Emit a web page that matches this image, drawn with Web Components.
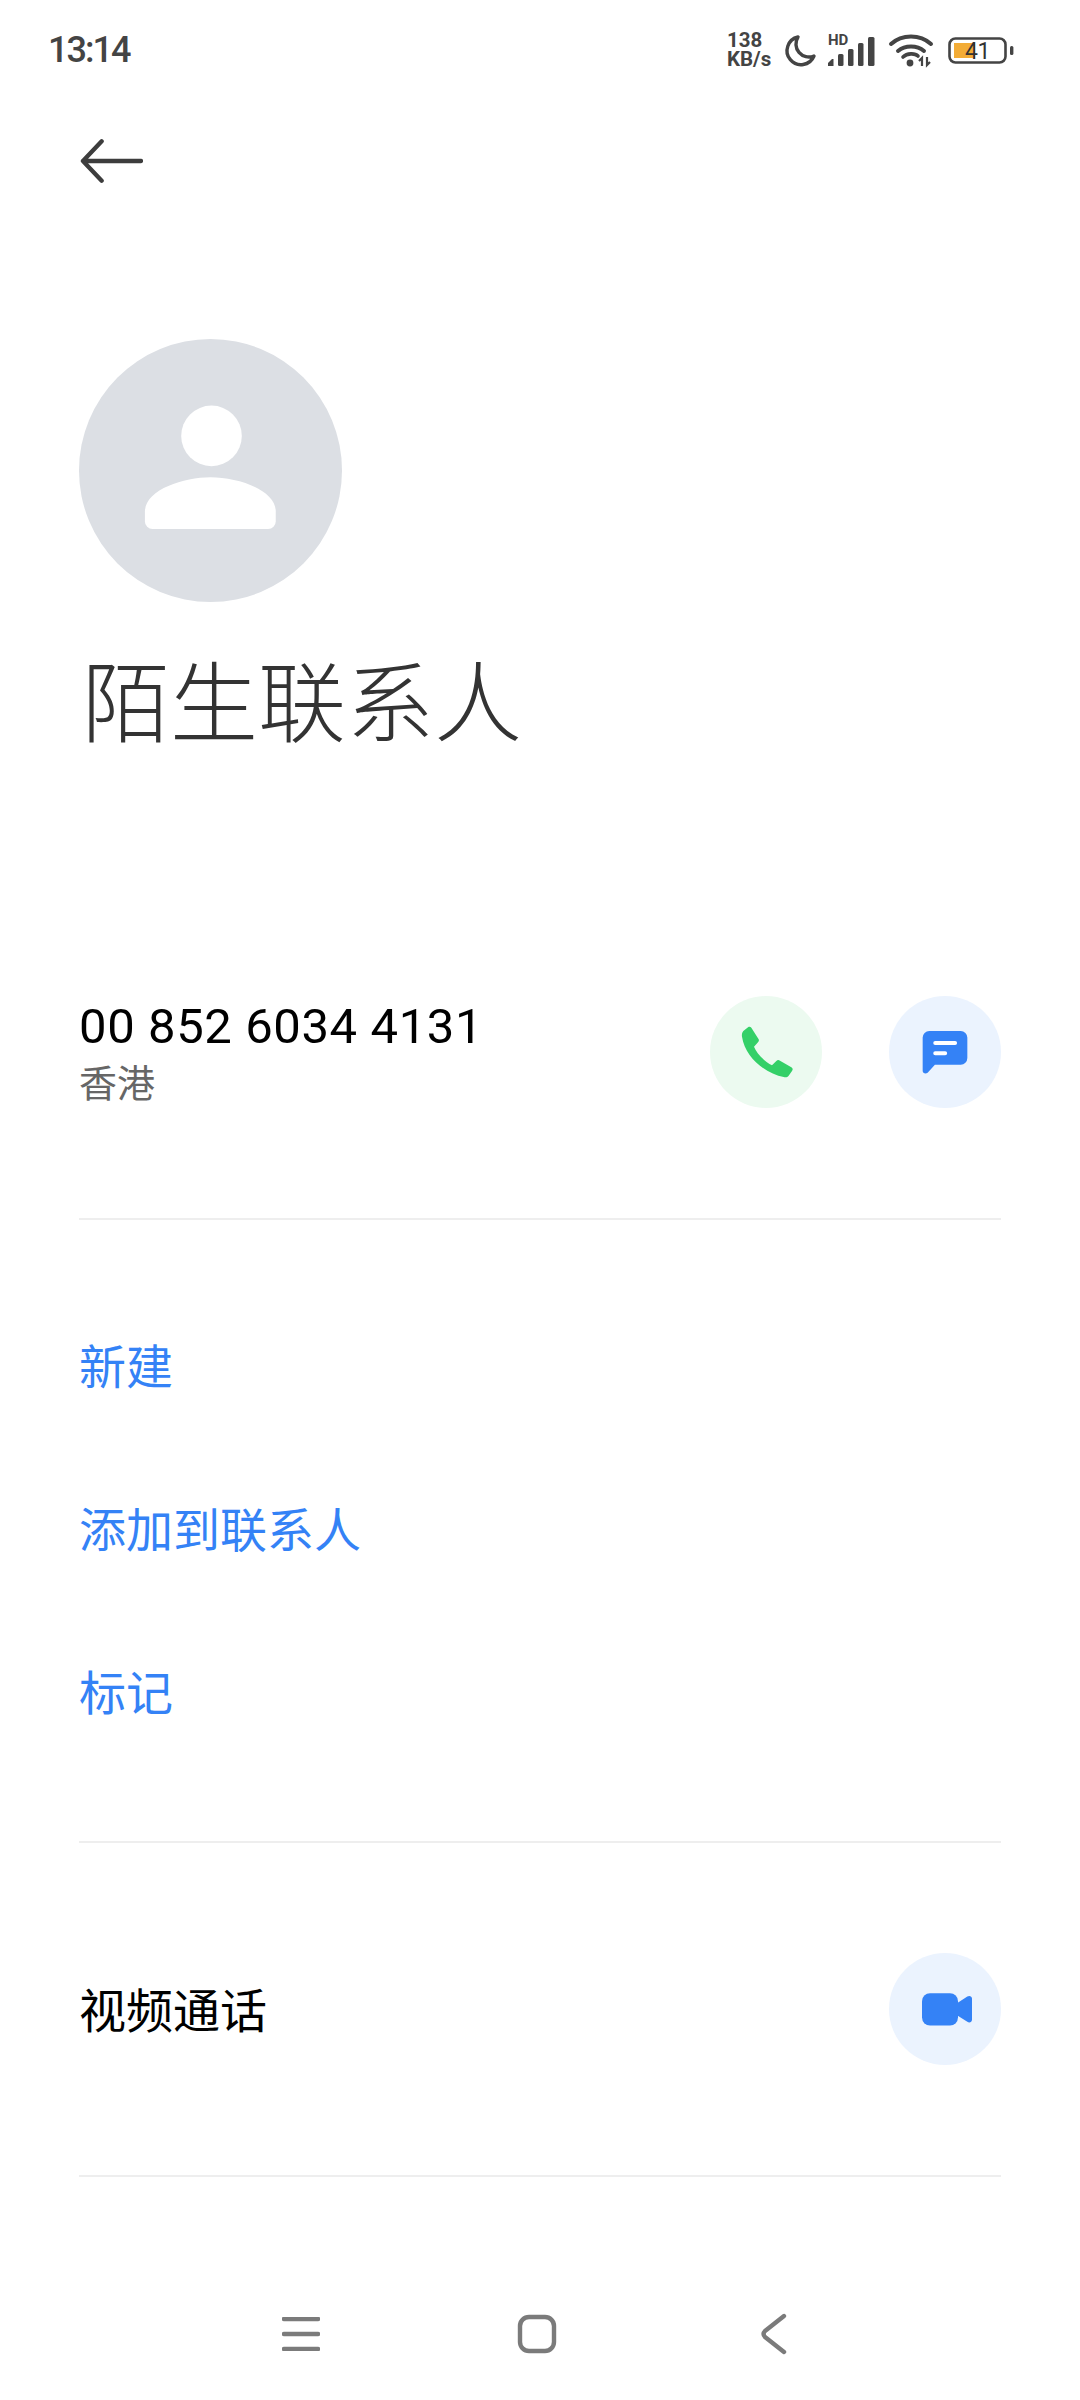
<!DOCTYPE html>
<html lang="zh">
<head>
<meta charset="utf-8">
<title>陌生联系人</title>
<style>
    html, body { margin: 0; background: #fff; }
    body { width: 1080px; height: 2400px; overflow: hidden; font-family: Roboto, "Noto Sans CJK SC", sans-serif; }
    app-screen { --blue: #3482f6; --line: #eeeeee; }
</style>
</head>
<body>
<app-screen>
    <status-bar slot="status"></status-bar>
    <back-bar slot="top"></back-bar>
    <contact-head slot="head">陌生联系人</contact-head>
    <section-row slot="list" height="334" line>
        <phone-info number="00 852 6034 4131" region="香港"></phone-info>
        <round-button slot="end" kind="call"></round-button>
        <round-button slot="end" kind="sms"></round-button>
    </section-row>
    <action-list slot="list">
        <action-item>新建</action-item>
        <action-item>添加到联系人</action-item>
        <action-item>标记</action-item>
    </action-list>
    <section-row slot="list" height="334" line>
        <span style="font:400 47px 'Noto Sans CJK SC',sans-serif;color:#000;padding-bottom:4px">视频通话</span>
        <round-button slot="end" kind="video"></round-button>
    </section-row>
    <nav-bar slot="nav"></nav-bar>
</app-screen>

<script>
const tpl = html => {
    const t = document.createElement('template');
    t.innerHTML = html;
    return t;
};

class Base extends HTMLElement {
    constructor() {
        super();
        this.attachShadow({ mode: 'open' }).appendChild(this.constructor.template.content.cloneNode(true));
    }
}

customElements.define('app-screen', class extends Base {
    static template = tpl(`<style>
        :host { display:flex; flex-direction:column; width:1080px; height:2400px; }
        main { display:block; }
        nav { margin-top:auto; }
    </style>
    <slot name="status"></slot>
    <slot name="top"></slot>
    <slot name="head"></slot>
    <main><slot name="list"></slot></main>
    <nav><slot name="nav"></slot></nav>`);
});

customElements.define('status-bar', class extends Base {
    static template = tpl(`<style>
        :host { display:flex; align-items:center; height:100px; padding:0 65px 0 48px; color:#444; font-family:Roboto,sans-serif; }
        .time { font-size:36px; font-weight:500; letter-spacing:-2px; }
        .right { margin-left:auto; display:flex; align-items:center; }
        .speed { width:48px; font-size:20.5px; font-weight:700; line-height:19px; margin-right:9px; }
        svg { display:block; overflow:visible; }
        .batt { position:relative; margin-left:15px; width:67px; height:27px; }
        .batt b { position:absolute; left:0; right:8px; top:1px; text-align:center; font-size:23px; line-height:27px; font-weight:400; color:#333; letter-spacing:-.5px; }
    </style>
    <span class="time">13:14</span>
    <div class="right">
        <div class="speed">138<br>KB/s</div>
        <svg width="33" height="33" viewBox="0 0 33 33"><path d="M14 3 A14 14 0 1 0 30 22 A13 13 0 0 1 14 3Z" fill="none" stroke="#444" stroke-width="3.4" stroke-linejoin="round"/></svg>
        <svg style="margin-left:11px" width="49" height="32" viewBox="0 0 49 32">
            <text x="0" y="11" font-family="Roboto,sans-serif" font-size="15" font-weight="700" fill="#444">HD</text>
            <g fill="#444"><path d="M0 32v-3l4-4h1.500v7z"/><rect x="10" y="20" width="5.500" height="12" rx="1.500"/><rect x="20" y="15" width="5.500" height="17" rx="1.500"/><rect x="30" y="9" width="5.500" height="23" rx="1.500"/><rect x="40" y="3" width="6.500" height="29" rx="1.500"/></g>
        </svg>
        <svg style="margin-left:12px" width="44" height="33" viewBox="0 0 44 33">
            <g fill="none" stroke="#444" stroke-width="4" stroke-linecap="round"><path d="M2 10C13 0 31 0 42 10"/><path d="M9 17C16 11 28 11 35 17"/></g>
            <path d="M14 23C18 19 26 19 29 22" fill="none" stroke="#444" stroke-width="3.600" stroke-linecap="round"/>
            <circle cx="21" cy="29" r="3.400" fill="#444"/>
            <path d="M33 32V24L30 27M38 23V31L41 28" fill="none" stroke="#444" stroke-width="2.200"/>
        </svg>
        <div class="batt">
            <svg width="67" height="27" viewBox="0 0 67 27">
                <rect x="1.500" y="1.500" width="56" height="24" rx="6" fill="none" stroke="#444" stroke-width="2.600"/>
                <rect x="6" y="6" width="21" height="15" fill="#f3ac36"/>
                <rect x="62" y="9" width="3.400" height="9" rx="1.500" fill="#444"/>
            </svg>
            <b>41</b>
        </div>
    </div>`);
});

customElements.define('back-bar', class extends Base {
    static template = tpl(`<style>
        :host { display:flex; align-items:center; height:122px; padding-left:80px; }
        svg { display:block; }
    </style>
    <svg width="63" height="44" viewBox="0 0 64 44"><path d="M22 2 3 22 22 42M3 22H62" fill="none" stroke="#3d3d3d" stroke-width="4.400" stroke-linecap="round" stroke-linejoin="round"/></svg>`);
});

customElements.define('contact-head', class extends Base {
    static template = tpl(`<style>
        :host { display:block; height:664px; padding:117px 0 0 79px; box-sizing:border-box; }
        svg { display:block; }
        h1 { margin:32px 0 0 3px; font:300 88px/125px "Noto Sans CJK SC",sans-serif; color:#333; }
    </style>
    <svg width="263" height="263" viewBox="57 57 790 790">
        <circle cx="452" cy="452" r="395" fill="#dcdfe4"/>
        <circle cx="455" cy="348" r="91" fill="#fff"/>
        <path d="M255 575C255 510 370 472 452 472 535 472 648 510 648 575V605A23 23 0 0 1 625 628H278A23 23 0 0 1 255 605Z" fill="#fff"/>
    </svg>
    <h1><slot></slot></h1>`);
});

customElements.define('section-row', class extends Base {
    static template = tpl(`<style>
        :host { display:flex; align-items:center; box-sizing:border-box; margin:0 79px; border-bottom:2px solid var(--line); }
        .end { margin-left:auto; display:flex; gap:67px; }
    </style>
    <slot></slot><div class="end"><slot name="end"></slot></div>`);
    connectedCallback() {
        this.style.height = this.getAttribute('height') + 'px';
    }
});

customElements.define('phone-info', class extends Base {
    static template = tpl(`<style>
        :host { display:block; }
        .num { font:400 49px/58px Roboto,sans-serif; color:#000; letter-spacing:.6px; }
        .reg { font:400 38px/50px "Noto Sans CJK SC",sans-serif; color:#666; }
    </style>
    <div class="num"></div><div class="reg"></div>`);
    connectedCallback() {
        this.shadowRoot.querySelector('.num').textContent = this.getAttribute('number');
        this.shadowRoot.querySelector('.reg').textContent = this.getAttribute('region');
    }
});

const ICONS = {
    call: `<svg style="margin-left:2px" width="55" height="55" viewBox="150 137 165 165"><path fill="#34d068" d="M175 143C178 141 182 142 184 145L205 178C208 182 207 186 204 189L192 202C200 222 225 248 246 258L259 245C262 242 266 241 270 244L304 264C309 267 309 271 306 275L296 289C292 294 287 295 281 293 230 285 165 235 156 172 155 166 156 160 160 155Z"/></svg>`,
    sms: `<svg width="46" height="45" viewBox="695 152 139 136"><path fill="#3482f6" d="M697 175A20 20 0 0 1 717 155H812A20 20 0 0 1 832 175V237A20 20 0 0 1 812 257H734L712 281C706 286 697 283 697 275Z"/><path d="M735 191H795M735 222H765" stroke="#fff" stroke-width="12" stroke-linecap="round"/></svg>`,
    video: `<svg style="margin-left:3px" width="50" height="33" viewBox="157 160 150 98"><rect x="157" y="160" width="108" height="97" rx="24" fill="#3482f6"/><path fill="#3482f6" d="M262 190 293 170C299 166 307 169 307 176V240C307 247 299 250 293 246L262 226Z"/></svg>`
};

customElements.define('round-button', class extends Base {
    static template = tpl(`<style>
        :host { display:flex; align-items:center; justify-content:center; width:112px; height:112px; border-radius:50%; background:#ebf3fe; }
        :host([kind=call]) { background:#ecfaf0; }
        svg { display:block; }
    </style><span></span>`);
    connectedCallback() {
        this.shadowRoot.querySelector('span').innerHTML = ICONS[this.getAttribute('kind')];
    }
});

customElements.define('action-list', class extends Base {
    static template = tpl(`<style>
        :host { display:flex; flex-direction:column; box-sizing:border-box; height:623px; margin:0 79px; padding-top:62px; border-bottom:2px solid var(--line); }
    </style><slot></slot>`);
});

customElements.define('action-item', class extends Base {
    static template = tpl(`<style>
        :host { display:flex; align-items:center; height:163px; font:400 47px "Noto Sans CJK SC",sans-serif; color:var(--blue); }
    </style><slot></slot>`);
});

customElements.define('nav-bar', class extends Base {
    static template = tpl(`<style>
        :host { display:flex; align-items:center; height:132px; padding-left:282px; }
        svg { display:block; }
    </style>
    <svg width="38" height="34" viewBox="0 0 38 34"><path d="M2 2H36M2 17H36M2 32H36" stroke="#7b7b7b" stroke-width="4.400" stroke-linecap="round"/></svg>
    <svg style="margin-left:197px" width="40" height="40" viewBox="0 0 40 40"><rect x="3" y="3" width="34" height="34" rx="9" fill="none" stroke="#7b7b7b" stroke-width="4.400"/></svg>
    <svg style="margin-left:204px" width="26" height="42" viewBox="0 0 26 42"><path d="M23 3 4 18C2 20 2 22 4 24L23 39" fill="none" stroke="#7b7b7b" stroke-width="4.400" stroke-linecap="round" stroke-linejoin="round"/></svg>`);
});
</script>
</body>
</html>
